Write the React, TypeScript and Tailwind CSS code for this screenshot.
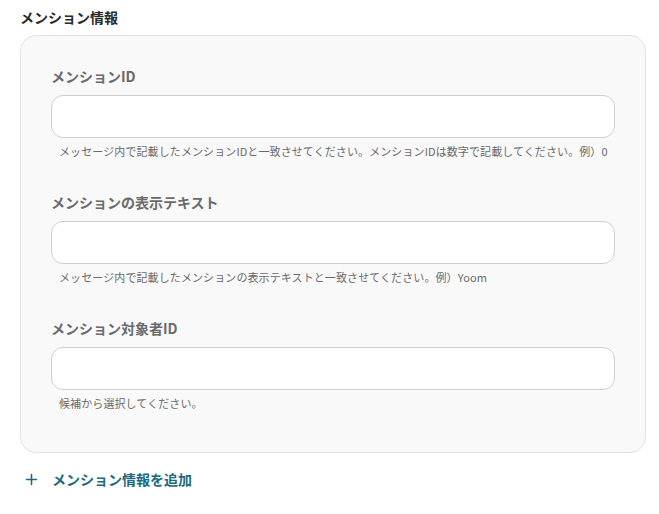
import { Plus } from "lucide-react";

const fields = [
  {
    label: "メンションID",
    help: "メッセージ内で記載したメンションIDと一致させてください。メンションIDは数字で記載してください。例）0",
  },
  {
    label: "メンションの表示テキスト",
    help: "メッセージ内で記載したメンションの表示テキストと一致させてください。例）Yoom",
  },
  {
    label: "メンション対象者ID",
    help: "候補から選択してください。",
  },
];

export default function App() {
  return (
    <div
      className="w-[659px] h-[514px] bg-white pl-[20px] pr-[13px] pt-[7px]"
      style={{ fontFamily: '"Noto Sans CJK JP", "Noto Sans", sans-serif' }}
    >
      <h2 className="text-[14px] leading-[20px] font-bold text-[#2a2a2a]">メンション情報</h2>

      <div className="mt-[8px] rounded-[16px] border border-[#e2e2e2] bg-[#f9f9f9] px-[30px] pt-[30px] pb-[41px] flex flex-col gap-[33px]">
        {fields.map((f) => (
          <div key={f.label} className="flex flex-col">
            <label className="text-[14px] leading-[20px] font-bold text-[#6a6a6a]">{f.label}</label>
            <input
              type="text"
              className="mt-[9px] h-[43px] w-full rounded-[12px] border border-[#cfcfcf] bg-white px-3 outline-none"
            />
            <p className="mt-[5px] pl-[8px] text-[11px] leading-[16px] text-[#6a6a6a] tracking-[0.1px]">{f.help}</p>
          </div>
        ))}
      </div>

      <button className="mt-[16px] flex items-center gap-[12px] pl-[3px] text-[#1d6a7f]">
        <Plus className="h-[17px] w-[17px]" strokeWidth={2.2} />
        <span className="text-[14px] leading-[20px] font-bold">メンション情報を追加</span>
      </button>
    </div>
  );
}
